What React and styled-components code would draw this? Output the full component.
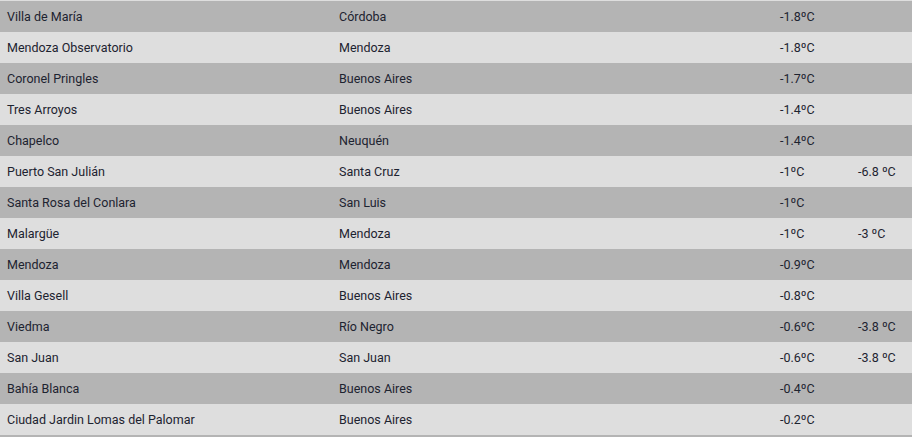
import styled, { createGlobalStyle } from "styled-components";

const GlobalStyle = createGlobalStyle`
  html, body {
    margin: 0;
    padding: 0;
    background: #dedede;
    overflow: hidden;
  }
  body {
    font-family: Roboto, "Liberation Sans", Arial, sans-serif;
  }
`;

const rows = [
  ["Villa de María", "Córdoba", "-1.8ºC", ""],
  ["Mendoza Observatorio", "Mendoza", "-1.8ºC", ""],
  ["Coronel Pringles", "Buenos Aires", "-1.7ºC", ""],
  ["Tres Arroyos", "Buenos Aires", "-1.4ºC", ""],
  ["Chapelco", "Neuquén", "-1.4ºC", ""],
  ["Puerto San Julián", "Santa Cruz", "-1ºC", "-6.8 ºC"],
  ["Santa Rosa del Conlara", "San Luis", "-1ºC", ""],
  ["Malargüe", "Mendoza", "-1ºC", "-3 ºC"],
  ["Mendoza", "Mendoza", "-0.9ºC", ""],
  ["Villa Gesell", "Buenos Aires", "-0.8ºC", ""],
  ["Viedma", "Río Negro", "-0.6ºC", "-3.8 ºC"],
  ["San Juan", "San Juan", "-0.6ºC", "-3.8 ºC"],
  ["Bahía Blanca", "Buenos Aires", "-0.4ºC", ""],
  ["Ciudad Jardin Lomas del Palomar", "Buenos Aires", "-0.2ºC", ""],
  ["", "", "", ""],
];

const Table = styled.div`
  width: 912px;
  height: 437px;
  padding-top: 1px;
  box-sizing: border-box;
  overflow: hidden;
  background: #dedede;
`;

const Row = styled.div`
  display: grid;
  grid-template-columns: 332px 441px 78px 1fr;
  align-items: center;
  height: 31px;
  padding-left: 7px;
  background: ${(p) => (p.$odd ? "#dedede" : "#b4b4b4")};
  color: #1d2330;
  font-size: 12.5px;
`;

const Cell = styled.div`
  white-space: nowrap;
`;

export default function App() {
  return (
    <>
      <GlobalStyle />
      <Table>
        {rows.map((r, i) => (
          <Row key={i} $odd={i % 2 === 1}>
            {r.map((c, j) => (
              <Cell key={j}>{c}</Cell>
            ))}
          </Row>
        ))}
      </Table>
    </>
  );
}
